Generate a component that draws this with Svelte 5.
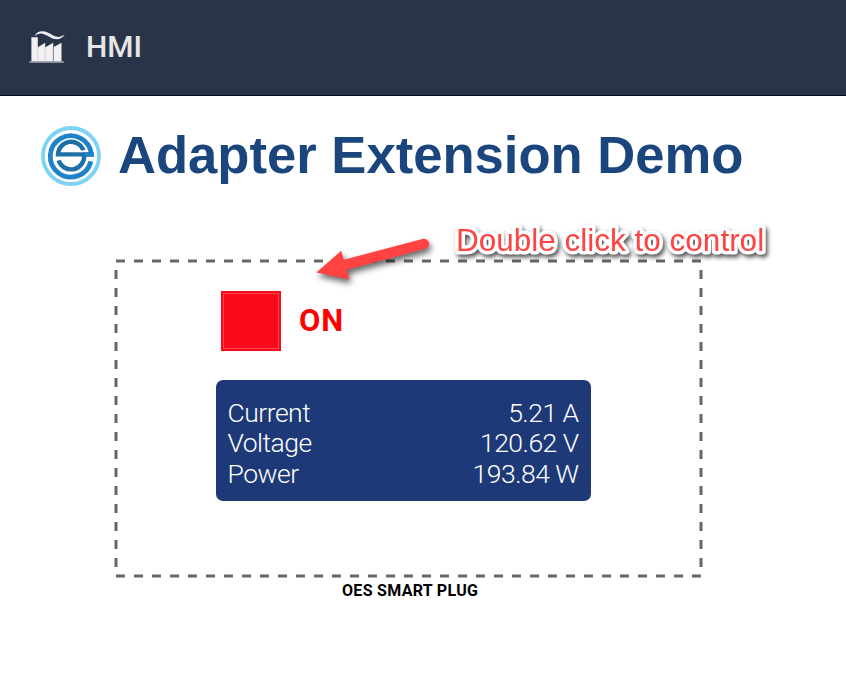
<script>
  const readings = [
    { label: 'Current', value: '5.21 A' },
    { label: 'Voltage', value: '120.62 V' },
    { label: 'Power', value: '193.84 W' }
  ];
  let on = $state(true);
</script>

<div class="page">
  <header>
    <svg class="factory" width="38" height="36" viewBox="0 0 38 36" aria-hidden="true">
      <path fill="#f3f0f3" d="M1.4 8.3H7.8V18.2L15.2 13.7V18.2L23.3 13.7V18.2L31.5 13.7V32.4H1.4Z" />
      <path fill="#a9adb6" d="M-.7 32.3H33.8V33.7H-.7Z" />
      <path fill="none" stroke="#c8c8d0" stroke-width=".7" d="M7.8 18V32.3M15.2 18V32.3" />
      <path fill="none" stroke="#59637a" stroke-width=".8" d="M23.4 18V32.3" />
      <path fill="#f3f0f3" d="M4.5 7.2C6.4 2.6 12 .9 17.7 3.6C23.7 6.8 28 10.3 34.8 5.6C30.5 11.9 24.5 11.4 17.9 7.1C12.6 3.8 8.6 3.4 4.5 7.2Z" />
    </svg>
    <span class="brand">HMI</span>
  </header>

  <main>
    <div class="title">
      <svg width="60" height="60" viewBox="0 0 60 60" fill="none" aria-hidden="true">
        <circle cx="30" cy="30" r="28" stroke="#7dd2f5" stroke-width="3.8" />
        <path stroke="#2082c8" stroke-width="4.8" d="M49.9 35.4A20.6 20.6 0 1 1 50.4 28.4H42" />
        <path stroke="#1c70a5" stroke-width="4.4" d="M42.4 24.4A13.1 13.1 0 0 0 17 28.4H43A13.1 13.1 0 0 1 17.6 34.4" />
        <path stroke="#2082c8" stroke-width="4.2" d="M44 28.4H52.7" />
        <path stroke="#fff" stroke-width="1.6" d="M34 25.3H47" />
      </svg>
      <h1>Adapter Extension Demo</h1>
    </div>

    <section class="plug">
      <svg class="frame" width="589" height="319" aria-hidden="true">
        <rect x="2" y="2" width="585" height="315" fill="none" stroke="#666" stroke-width="3" stroke-dasharray="9" />
      </svg>
      <div class="switch">
        <button aria-label="Toggle plug" ondblclick={() => (on = !on)}></button>
        <strong>{on ? 'ON' : 'OFF'}</strong>
      </div>
      <div class="readings">
        {#each readings as r}
          <div class="row"><span>{r.label}</span><span>{r.value}</span></div>
        {/each}
      </div>
    </section>
    <p class="caption">OES SMART PLUG</p>
  </main>

  <svg class="arrow" width="150" height="80" viewBox="300 220 150 80" aria-hidden="true">
    <path fill="#ff4343" d="M316.3 272.6L341.2 250.8L343.8 259.8L422.5 239A5.1 5.1 0 0 1 425.5 248.8L347 269.8L349 279.5Z" />
  </svg>
  <svg class="note" width="340" height="60">
    <text x="14" y="40.5">Double click to control</text>
  </svg>
</div>

<style>
  :global(body) { margin: 0; background: #fff; }
  .page { position: relative; width: 846px; height: 688px; overflow: hidden; font-family: Roboto, sans-serif; }
  header { box-sizing: border-box; height: 96px; padding: 29px 0 0 30px; display: flex; align-items: flex-start; background: #293448; border-bottom: 1px solid #080718; }
  .factory { overflow: visible; }
  .brand { margin-left: 18px; font-size: 30px; line-height: 35px; font-weight: 500; color: #e6e6e6; }
  .title { display: flex; align-items: center; padding: 30px 0 0 41px; height: 60px; }
  h1 { margin: 0 0 2px 17px; font: bold 52.6px/60px "Liberation Sans", Arial, sans-serif; color: #1b457d; white-space: nowrap; }
  .plug { position: relative; box-sizing: border-box; margin: 73px 0 0 114px; width: 589px; height: 319px; padding: 32px 0 0 102px; }
  .frame { position: absolute; inset: 0; }
  .switch { display: flex; align-items: center; height: 60px; margin-left: 5px; }
  button { width: 60px; height: 60px; padding: 0; border: 2px solid #fa0a1b; background: #f90a1a; box-shadow: inset 0 0 0 1px #fb4350; border-radius: 0; }
  strong { margin: 0 0 2px 18px; font-size: 31px; letter-spacing: .8px; font-weight: 700; color: #f00; }
  .readings { box-sizing: border-box; width: 375px; height: 121px; margin-top: 29px; padding: 17.5px 12px 0 11.5px; border-radius: 7px; background: #1e3977; color: #fff; font-size: 26.5px; font-weight: 300; line-height: 30.5px; letter-spacing: -.5px; }
  .row { display: flex; justify-content: space-between; }
  .row span:last-child { margin-right: .4px; }
  .caption { margin: 3px 0 0 342px; font-size: 16px; line-height: 19px; letter-spacing: .3px; font-weight: 700; color: #000; }
  .arrow { position: absolute; left: 300px; top: 220px; filter: drop-shadow(2px 4px 3px rgba(0, 0, 0, .6)); }
  .note {
    position: absolute; left: 442px; top: 210px; overflow: visible;
    font: 31.5px "Liberation Sans", Arial, sans-serif; fill: #ff4343;
    stroke: #fff; stroke-width: 7px; stroke-linejoin: round; paint-order: stroke fill;
    filter: drop-shadow(2px 3px 2px rgba(0, 0, 0, .65));
  }
</style>
